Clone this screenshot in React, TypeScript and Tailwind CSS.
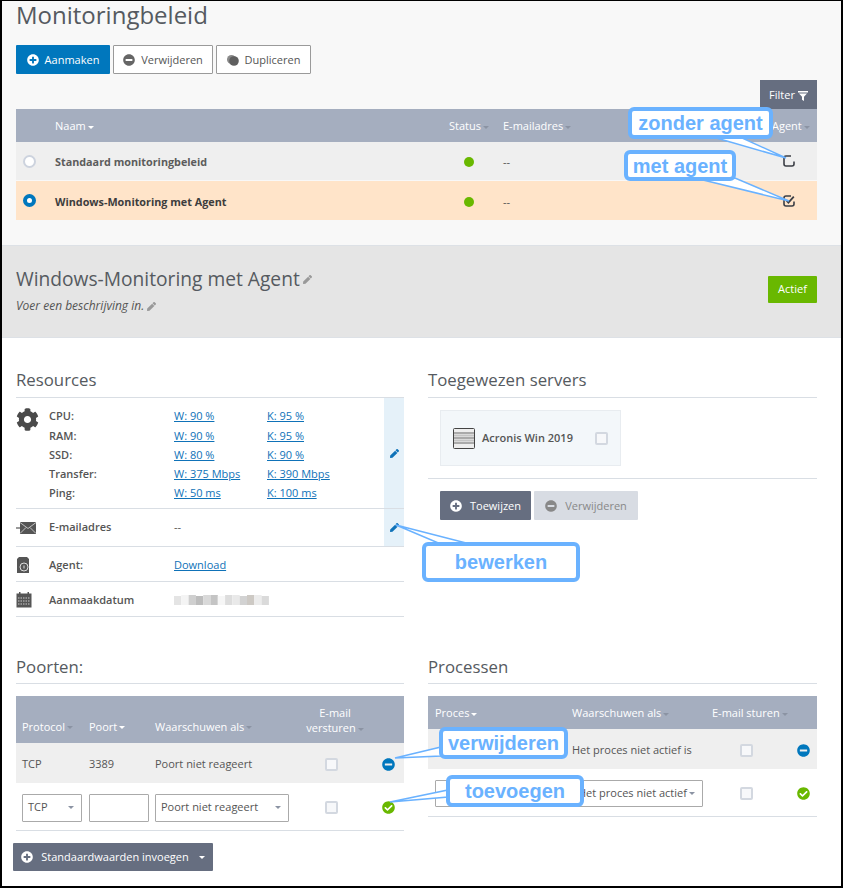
import React from "react";
import { FaCheckCircle, FaCog, FaMinusCircle, FaPen, FaPlusCircle } from "react-icons/fa";

const Caret = ({ light }: { light?: boolean }) => (
  <span
    className={`inline-block align-middle ml-[2px] w-0 h-0 border-x-[3px] border-x-transparent border-t-[3px] ${
      light ? "border-t-white" : "border-t-[#8b93a3]"
    }`}
  />
);

const Btn = ({ children, className }: { children: React.ReactNode; className: string }) => (
  <button className={`h-[29px] flex items-center justify-center rounded-[1px] text-[11px] ${className}`}>
    {children}
  </button>
);

const Heading = ({ children, className = "pb-[6px]" }: { children: React.ReactNode; className?: string }) => (
  <h2 className={`text-[16.8px] leading-[22px] text-[#555a60] border-b border-[#d9dee4] ${className}`}>{children}</h2>
);

const Checkbox = ({ className = "" }: { className?: string }) => (
  <span className={`block w-[13px] h-[13px] rounded-[2px] border-2 border-[#d3d8e0] bg-[#f7f8fa] ${className}`} />
);

const SelectBox = ({ label, className }: { label: string; className: string }) => (
  <div className={`h-[28px] bg-white border border-[#aaa] rounded-[1px] flex items-center justify-between pl-[5px] pr-[7px] text-[11px] text-[#555] ${className}`}>
    <span className="whitespace-nowrap">{label}</span>
    <Caret />
  </div>
);

const LinkText = ({ children }: { children: React.ReactNode }) => (
  <a className="text-[#0f72b8] underline text-[11px]">{children}</a>
);

const limits = [
  ["CPU:", "W: 90 %", "K: 95 %"],
  ["RAM:", "W: 90 %", "K: 95 %"],
  ["SSD:", "W: 80 %", "K: 90 %"],
  ["Transfer:", "W: 375 Mbps", "K: 390 Mbps"],
  ["Ping:", "W: 50 ms", "K: 100 ms"],
];

const blurGrays = ["#e4e4e4", "#f4f4f4", "#cfcfcf", "#bdbdbd", "#d9d9d9", "#c4c4c4", "#f6f6f6", "#dddddd", "#e9e9e9", "#d2d2d2", "#cdc9c4", "#ececec", "#dadada"];

// checkbox glyph of the agent column, open at the top right
const AgentBox = ({ checked }: { checked?: boolean }) => (
  <svg width="12" height="12" viewBox="0 0 12 12" fill="none" className="block">
    <path d="M8 1H3a2 2 0 0 0-2 2v6a2 2 0 0 0 2 2h6a2 2 0 0 0 2-2V6.5" stroke="#3c3f46" strokeWidth="1.6" />
    {checked && <path d="M3.2 5.2l2.2 2.4L10.8 1.6" stroke="#3c3f46" strokeWidth="1.8" />}
  </svg>
);

const Callout = ({ text, className }: { text: string; className: string }) => (
  <div className={`absolute box-border border-[4px] border-[#6ab2ff] rounded-[6px] bg-white flex items-center justify-center font-['Liberation_Sans',sans-serif] font-bold text-[20px] text-[#6ab2ff] ${className}`}>
    {text}
  </div>
);

export default function App() {
  return (
    <div className="relative w-[843px] h-[888px] overflow-hidden box-border bg-white border-black border-x-2 border-b-2 border-t font-['Open_Sans',sans-serif] text-[#555]">
      {/* overview */}
      <section className="bg-[#f8f8f8] pl-[14px] pr-[24px] pb-[25px]">
        <h1 className="text-[24px] leading-[28px] text-[#555a60]">Monitoringbeleid</h1>
        <div className="mt-[16px] flex gap-[3px]">
          <Btn className="w-[94px] gap-[6px] pt-px bg-[#0077bd] text-white">
            <FaPlusCircle className="text-[12px]" /> Aanmaken
          </Btn>
          <Btn className="w-[100px] gap-[6px] pt-px border border-[#9a9a9a] bg-white">
            <FaMinusCircle className="text-[12px] text-[#666]" /> Verwijderen
          </Btn>
          <Btn className="w-[95px] gap-[6px] pt-px border border-[#9a9a9a] bg-white">
            <svg width="12" height="11" viewBox="0 0 12 11" className="shrink-0">
              <circle cx="4.5" cy="4.5" r="4.5" fill="#8a8a8a" />
              <circle cx="7" cy="6" r="4.8" fill="#5f5f5f" />
            </svg>
            Dupliceren
          </Btn>
        </div>
        <div className="mt-[6px] flex justify-end">
          <div className="w-[57px] h-[29px] pt-[2px] bg-[#666e80] text-white text-[11px] flex items-center justify-center gap-[3px]">
            Filter
            <svg width="10" height="10" viewBox="0 0 10 10" className="block">
              <path d="M0 0h10v1.4H0zM1 2.4h8L6 5.8V10L4 8.8V5.8z" fill="#fff" />
            </svg>
          </div>
        </div>
        <div className="grid grid-cols-[39px_394px_54px_269px_45px] h-[33px] pt-[2px] items-center bg-[#a5aebf] text-white text-[11px]">
          <span />
          <span>Naam<Caret light /></span>
          <span>Status<Caret /></span>
          <span>E-mailadres<Caret /></span>
          <span>Agent<Caret /></span>
        </div>
        <div className="grid grid-cols-[39px_394px_54px_269px_45px] h-[38px] items-center bg-[#efefef] text-[11px]">
          <span className="ml-[7px] block w-[13px] h-[13px] rounded-full border-2 border-[#cdd3de] bg-white" />
          <span className="pt-[2px] font-bold text-[10.8px] text-[#5c5c5c]">Standaard monitoringbeleid</span>
          <span className="mt-[2px] ml-[15px] block w-[10px] h-[10px] rounded-full bg-[#69b800]" />
          <span className="pt-[2px]">--</span>
          <span className="ml-[11px]"><AgentBox /></span>
        </div>
        <div className="mt-px grid grid-cols-[39px_394px_54px_269px_45px] h-[39px] items-center bg-[#ffe4c9] text-[11px]">
          <span className="ml-[7px] block w-[13px] h-[13px] rounded-full border-[4px] border-[#0077bd] bg-white" />
          <span className="pt-[3px] font-bold text-[10.8px] text-[#3d3d3d]">Windows-Monitoring met Agent</span>
          <span className="mt-[2px] ml-[15px] block w-[10px] h-[10px] rounded-full bg-[#69b800]" />
          <span className="pt-[3px]">--</span>
          <span className="ml-[11px]"><AgentBox checked /></span>
        </div>
      </section>

      {/* selected policy band */}
      <section className="h-[93px] bg-[#e5e5e5] border-y border-[#dde1e6] pl-[14px] pr-[24px] flex justify-between">
        <div className="pt-[21px]">
          <div className="flex items-center gap-[3px] text-[19.2px] leading-[24px] text-[#555a60]">
            Windows-Monitoring met Agent <FaPen className="text-[9px] text-[#999]" />
          </div>
          <div className="mt-[7px] flex items-center gap-[3px] text-[12px] leading-[16px] italic">
            Voer een beschrijving in. <FaPen className="text-[9px] text-[#999]" />
          </div>
        </div>
        <div className="mt-[30px] w-[49px] h-[27px] rounded-[1px] bg-[#69b800] text-white text-[11px] flex items-center justify-center">
          Actief
        </div>
      </section>

      {/* details */}
      <section className="pl-[14px] pt-[31px] grid grid-cols-[388px_389px] gap-x-[24px] gap-y-[38px]">
        <div>
          <Heading>Resources</Heading>
          <div className="flex h-[111px] border-b border-[#d9dee4]">
            <div className="w-[33px] pt-[10px]"><FaCog className="text-[23px] text-[#4a4a4a]" /></div>
            <div className="flex-1 pt-[9px]">
              {limits.map(([name, w, k]) => (
                <div key={name} className="grid grid-cols-[125px_93px_1fr] h-[19.25px] items-center text-[11px]">
                  <span className="font-semibold">{name}</span>
                  <span><LinkText>{w}</LinkText></span>
                  <span><LinkText>{k}</LinkText></span>
                </div>
              ))}
            </div>
            <div className="w-[20px] bg-[#e5f1f9] flex items-center justify-center">
              <FaPen className="text-[9px] text-[#0f72b8]" />
            </div>
          </div>
          <div className="flex h-[38px] items-center border-b border-[#d9dee4]">
            <div className="w-[33px]">
              <svg width="20" height="12" viewBox="0 0 20 12" className="block">
                <path d="M0 6h6" stroke="#777" strokeWidth="1.5" />
                <rect x="4" y="0" width="16" height="12" fill="#555" />
                <path d="M4 0.5l8 6 8-6M4 11.5l6-6M20 11.5l-6-6" stroke="#ddd" strokeWidth="0.8" fill="none" />
              </svg>
            </div>
            <span className="w-[125px] font-semibold text-[11px]">E-mailadres</span>
            <span className="flex-1 text-[11px]">--</span>
            <div className="w-[20px] h-full bg-[#e5f1f9] flex items-center justify-center">
              <FaPen className="text-[9px] text-[#0f72b8]" />
            </div>
          </div>
          <div className="flex h-[35px] pt-[2px] items-center border-b border-[#d9dee4]">
            <div className="w-[33px]">
              <svg width="15" height="16" viewBox="0 0 15 16" className="block">
                <path d="M1 2l2-2h8l2 2v14H1z" fill="#555" />
                <circle cx="8" cy="10" r="4" fill="none" stroke="#ddd" strokeWidth="1" />
                <rect x="7.5" y="8.5" width="1" height="3" fill="#ddd" />
              </svg>
            </div>
            <span className="w-[125px] font-semibold text-[11px]">Agent:</span>
            <LinkText>Download</LinkText>
          </div>
          <div className="flex h-[35px] pt-[2px] items-center border-b border-[#d9dee4]">
            <div className="w-[33px]">
              <svg width="16" height="16" viewBox="0 0 16 16" className="block">
                <rect x="0.5" y="1.5" width="15" height="14" fill="#555" />
                <rect x="3" y="0" width="1.5" height="3" fill="#555" />
                <rect x="11.5" y="0" width="1.5" height="3" fill="#555" />
                <path d="M2 6h12M2 9h12M2 12h12" stroke="#ccc" strokeWidth="1.2" strokeDasharray="1.5 1" />
              </svg>
            </div>
            <span className="w-[125px] font-semibold text-[11px]">Aanmaakdatum</span>
            <svg width="95" height="10" viewBox="0 0 95 10" className="block">
              {blurGrays.map((c, i) => (
                <rect key={i} x={i * 7.3} y={i % 3 === 0 ? 1 : 0} width="7.3" height={i % 3 === 0 ? 9 : 10} fill={c} />
              ))}
            </svg>
          </div>
        </div>

        <div>
          <Heading>Toegewezen servers</Heading>
          <div className="px-[12px] py-[12px] border-b border-[#d9dee4]">
            <div className="w-[181px] h-[56px] bg-[#f3f7fa] border border-[#e8ecf0] flex items-center pl-[12px]">
              <svg width="22" height="21" viewBox="0 0 22 21" className="block shrink-0">
                <rect x="0.5" y="0.5" width="21" height="20" rx="1" fill="#eeeeee" stroke="#444" />
                <path d="M1 5h20M1 10h20M1 15h20" stroke="#666" strokeWidth="1" />
                <path d="M1 7.5h20M1 12.5h20" stroke="#c4c4c4" strokeWidth="2" />
              </svg>
              <span className="ml-[7px] w-[113px] text-[11px] font-semibold">Acronis Win 2019</span>
              <Checkbox />
            </div>
          </div>
          <div className="mt-[12px] pl-[12px] flex gap-[3px]">
            <Btn className="w-[91px] gap-[8px] pt-px bg-[#666e80] text-white">
              <FaPlusCircle className="text-[12px]" /> Toewijzen
            </Btn>
            <Btn className="w-[104px] gap-[8px] pt-px bg-[#d8dce3] text-[#888]">
              <FaMinusCircle className="text-[12px]" /> Verwijderen
            </Btn>
          </div>
        </div>

        <div>
          <Heading className="pt-px pb-[5px]">Poorten:</Heading>
          <div className="mt-[12px] grid grid-cols-[67px_66px_150px_66px_39px] h-[47px] bg-[#a5aebf] text-white text-[11px] items-end pb-[8px]">
            <span className="pl-[6px]">Protocol<Caret /></span>
            <span className="pl-[6px]">Poort<Caret light /></span>
            <span className="pl-[6px]">Waarschuwen als<Caret /></span>
            <span className="pl-[6px] text-center whitespace-nowrap leading-[15px]">E-mail<br />versturen<Caret /></span>
            <span />
          </div>
          <div className="grid grid-cols-[67px_66px_150px_66px_39px] h-[40px] pt-[2px] items-center bg-[#efefef] text-[11px]">
            <span className="pl-[6px]">TCP</span>
            <span className="pl-[6px]">3389</span>
            <span className="pl-[6px]">Poort niet reageert</span>
            <Checkbox className="ml-[26px]" />
            <FaMinusCircle className="ml-[17px] text-[13px] text-[#0077bd]" />
          </div>
          <div className="grid grid-cols-[67px_66px_150px_66px_39px] h-[48px] pt-[2px] items-center border-b border-[#d9dee4]">
            <div className="pl-[6px]"><SelectBox label="TCP" className="w-[60px]" /></div>
            <div className="pl-[6px]"><div className="w-[60px] h-[28px] bg-white border border-[#aaa] rounded-[1px]" /></div>
            <div className="pl-[6px]"><SelectBox label="Poort niet reageert" className="w-[134px]" /></div>
            <Checkbox className="ml-[26px]" />
            <FaCheckCircle className="ml-[17px] text-[13px] text-[#69b800]" />
          </div>
          <button className="mt-[12px] -ml-[3px] w-[200px] h-[28px] rounded-[1px] bg-[#666e80] text-white text-[11px] flex items-center justify-center gap-[8px]">
            <FaPlusCircle className="text-[12px]" /> Standaardwaarden invoegen <Caret light />
          </button>
        </div>

        <div>
          <Heading className="pt-px pb-[5px]">Processen</Heading>
          <div className="mt-[12px] grid grid-cols-[138px_140px_79px_32px] h-[33px] pt-[2px] bg-[#a5aebf] text-white text-[11px] items-center">
            <span className="pl-[7px]">Proces<Caret light /></span>
            <span className="pl-[6px] whitespace-nowrap">Waarschuwen als<Caret /></span>
            <span className="pl-[6px] whitespace-nowrap">E-mail sturen<Caret /></span>
            <span />
          </div>
          <div className="grid grid-cols-[138px_140px_79px_32px] h-[40px] pt-[2px] items-center bg-[#efefef] text-[11px]">
            <span />
            <span className="pl-[6px] whitespace-nowrap">Het proces niet actief is</span>
            <Checkbox className="ml-[34px]" />
            <FaMinusCircle className="ml-[12px] text-[13px] text-[#0077bd]" />
          </div>
          <div className="grid grid-cols-[138px_140px_79px_32px] h-[48px] pt-[2px] items-center border-b border-[#d9dee4]">
            <div className="pl-[7px]"><div className="w-[125px] h-[27px] bg-white border border-[#aaa] rounded-[1px]" /></div>
            <div className="pl-[6px]"><SelectBox label="Het proces niet actief" className="w-[131px] !h-[27px]" /></div>
            <Checkbox className="ml-[34px]" />
            <FaCheckCircle className="ml-[12px] text-[13px] text-[#69b800]" />
          </div>
        </div>
      </section>

      {/* annotations pasted on top of the screenshot */}
      <div className="absolute -left-[2px] -top-px w-[843px] h-[888px] pointer-events-none">
        <svg width="843" height="888" className="absolute left-0 top-0">
          <g fill="#fff" stroke="#6ab2ff" strokeWidth="1.5">
            <polygon points="713,137 740,137 786,158" />
            <polygon points="703,180 735,178 789,201" />
            <polygon points="443,545 470,544 396,525" />
            <polygon points="441,747 441,756 395,758" />
            <polygon points="448,790 448,797 390,802" />
          </g>
        </svg>
        <Callout text="zonder agent" className="left-[628px] top-[107px] w-[145px] h-[32px]" />
        <Callout text="met agent" className="left-[624px] top-[150px] w-[112px] h-[31px]" />
        <Callout text="bewerken" className="left-[422px] top-[542px] w-[158px] h-[40px]" />
        <Callout text="verwijderen" className="left-[439px] top-[727px] w-[129px] h-[32px]" />
        <Callout text="toevoegen" className="left-[446px] top-[775px] w-[138px] h-[32px]" />
      </div>
    </div>
  );
}
